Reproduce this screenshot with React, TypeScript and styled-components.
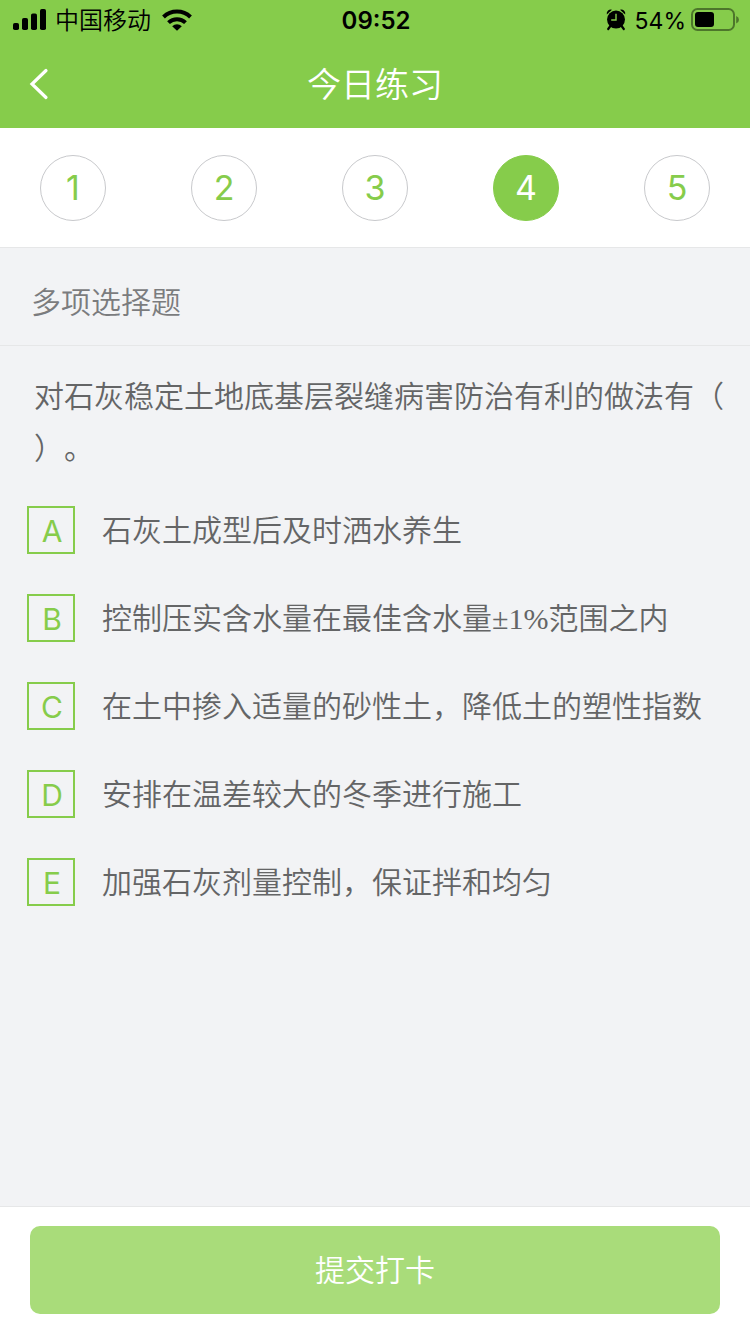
import React, { useState } from "react";
import styled, { createGlobalStyle } from "styled-components";

const GREEN = "#86cc4b";
const CJK = '"Noto Sans CJK SC", sans-serif';

const GlobalStyle = createGlobalStyle`
  * { box-sizing: border-box; }
  body { margin: 0; background: #f2f3f5; }
  button, input { font: inherit; margin: 0; padding: 0; border: 0; }
`;

const Screen = styled.div`
  display: flex;
  flex-direction: column;
  min-height: 100vh;
  font-family: Inter, ${CJK};
  font-size: 30px;
  font-weight: 350;
  color: #646566;
  background: #f2f3f5;
`;

const Header = styled.header`
  background: ${GREEN};
`;

const StatusBar = styled.div`
  display: grid;
  grid-template-columns: 1fr auto 1fr;
  align-items: center;
  height: 40px;
  padding: 0 11px 0 13px;
  font-size: 24px;
  line-height: 32px;
  color: #000;
`;

const StatusGroup = styled.div<{ $end?: boolean }>`
  display: flex;
  align-items: center;
  justify-content: ${(p) => (p.$end ? "flex-end" : "flex-start")};
  gap: ${(p) => (p.$end ? "5px" : "9px")};

  svg { display: block; flex: none; }
`;

const Carrier = styled.span`
  padding: 2px 2px 0 0;
`;

const Charge = styled.span`
  padding: 2px 0 0 4px;
  font-size: 23px;
  font-weight: 400;
`;

const Clock = styled.time`
  padding-top: 2px;
  font-weight: 600;
`;

const TitleBar = styled.div`
  display: grid;
  grid-template-columns: 88px 1fr 88px;
  align-items: center;
  height: 88px;
`;

const BackButton = styled.button`
  display: flex;
  align-items: center;
  height: 88px;
  padding-left: 29px;
  background: none;
  cursor: pointer;
`;

const Title = styled.h1`
  margin: 0;
  padding-top: 2px;
  font-size: 34px;
  font-weight: 350;
  line-height: 86px;
  text-align: center;
  color: #fff;
`;

const Steps = styled.nav`
  display: flex;
  justify-content: space-between;
  padding: 27px 40px 26px;
  background: #fff;
  border-bottom: 1px solid #e6e7e8;
`;

const Step = styled.button<{ $active: boolean }>`
  && {
    width: 66px;
    height: 66px;
    border: 1px solid ${(p) => (p.$active ? GREEN : "#c8c9cc")};
    border-radius: 50%;
    background: ${(p) => (p.$active ? GREEN : "#fff")};
    color: ${(p) => (p.$active ? "#fff" : GREEN)};
    font-size: 34px;
    font-weight: 400;
    line-height: 64px;
    text-align: center;
    cursor: pointer;
  }
`;

const Kind = styled.h2`
  margin: 0;
  padding: 4px 31px 0;
  height: 98px;
  border-bottom: 1px solid #e6e7e8;
  font-size: 30px;
  font-weight: 350;
  line-height: 100px;
  color: #7b7c7e;
`;

const Quiz = styled.fieldset`
  flex: 1;
  margin: 0;
  padding: 0;
  border: 0;
  min-width: 0;
`;

const Question = styled.legend`
  padding: 24px 24px 0 34px;
  line-height: 52px;
  text-spacing-trim: space-all;
`;

const Options = styled.ul`
  display: flex;
  flex-direction: column;
  gap: 40px;
  margin: 0;
  padding: 32px 27px;
  list-style: none;
`;

const Option = styled.label`
  display: flex;
  align-items: center;
  gap: 27px;
  cursor: pointer;
`;

const Mark = styled.span`
  display: grid;
  flex: none;
  width: 48px;
  height: 48px;
  color: ${GREEN};

  > * { grid-area: 1 / 1; }
`;

const Box = styled.input`
  && {
    appearance: none;
    width: 48px;
    height: 48px;
    border: 2px solid ${GREEN};
    cursor: pointer;
  }
  &:checked { background: ${GREEN}; }
  &:checked + span { color: #fff; }
`;

const Letter = styled.span`
  padding-left: 2px;
  font-weight: 400;
  line-height: 50px;
  text-align: center;
  pointer-events: none;
`;

const OptionText = styled.span`
  padding-top: 2px;
  font-family: "Liberation Serif", ${CJK};
  line-height: 46px;
`;

const Footer = styled.footer`
  padding: 19px 30px 20px;
  background: #fff;
  border-top: 1px solid #e6e7e8;
`;

const Submit = styled.button`
  && {
    display: block;
    width: 100%;
    height: 88px;
    border-radius: 10px;
    background: #a9dc7a;
    color: #fff;
    line-height: 88px;
    cursor: pointer;
  }
`;

const SignalIcon = () => (
  <svg width="33" height="22" viewBox="0 0 33 22" aria-hidden="true">
    <rect x="0" y="14" width="6" height="7" rx="1.8" />
    <rect x="9" y="9" width="6" height="12" rx="1.8" />
    <rect x="18" y="4.5" width="6" height="16.5" rx="1.8" />
    <rect x="27" y="0" width="6" height="21" rx="1.8" />
  </svg>
);

const WifiIcon = () => (
  <svg width="30" height="22" viewBox="0 0 30 22" aria-hidden="true">
    <g fill="none" stroke="#000" strokeWidth="4">
      <path d="M1.5 8a19.5 19.5 0 0 1 27 0" />
      <path d="M6.5 13.6a12.4 12.4 0 0 1 17 0" />
    </g>
    <path d="M15 21.8l-4.8-4.6a7.2 7.2 0 0 1 9.6 0z" />
  </svg>
);

const AlarmIcon = () => (
  <svg width="20" height="22" viewBox="0 0 20 22" aria-hidden="true">
    <circle cx="10" cy="10.6" r="9" />
    <path d="M.8 5.4A4 4 0 0 1 6 .8zM19.2 5.4A4 4 0 0 0 14 .8z" />
    <path d="M4.4 17L2.2 20M15.6 17l2.2 3" stroke="#000" strokeWidth="2.2" strokeLinecap="round" />
    <path d="M10 4.8V11H5.2" fill="none" stroke={GREEN} strokeWidth="1.4" />
  </svg>
);

const BatteryIcon = () => (
  <svg width="48" height="24" viewBox="0 0 48 24" aria-hidden="true">
    <rect x="1" y="1" width="42" height="21" rx="5.5" fill="none" stroke="#000" strokeOpacity=".42" strokeWidth="2" />
    <rect x="4" y="4" width="19" height="15" rx="3" />
    <path d="M45.2 8q2.8 1 2.8 3.7t-2.8 3.7z" fillOpacity=".42" />
  </svg>
);

const steps = [1, 2, 3, 4, 5];
const options = [
  ["A", "石灰土成型后及时洒水养生"],
  ["B", "控制压实含水量在最佳含水量±1%范围之内"],
  ["C", "在土中掺入适量的砂性土，降低土的塑性指数"],
  ["D", "安排在温差较大的冬季进行施工"],
  ["E", "加强石灰剂量控制，保证拌和均匀"],
];

export default function App() {
  const [current, setCurrent] = useState(4);

  return (
    <Screen lang="zh-CN">
      <GlobalStyle />
      <Header>
        <StatusBar>
          <StatusGroup>
            <SignalIcon />
            <Carrier>中国移动</Carrier>
            <WifiIcon />
          </StatusGroup>
          <Clock>09:52</Clock>
          <StatusGroup $end>
            <AlarmIcon />
            <Charge>54%</Charge>
            <BatteryIcon />
          </StatusGroup>
        </StatusBar>
        <TitleBar>
          <BackButton type="button" aria-label="返回">
            <svg width="20" height="32" viewBox="0 0 20 32" fill="none" stroke="#fff" strokeWidth="3.2" strokeLinecap="round" strokeLinejoin="miter">
              <path d="M17 2.5L3 16l14 13.5" />
            </svg>
          </BackButton>
          <Title>今日练习</Title>
        </TitleBar>
      </Header>
      <Steps>
        {steps.map((n) => (
          <Step
            key={n}
            type="button"
            $active={n === current}
            aria-current={n === current ? "step" : undefined}
            onClick={() => setCurrent(n)}
          >
            {n}
          </Step>
        ))}
      </Steps>
      <Kind>多项选择题</Kind>
      <Quiz>
        <Question>
          对石灰稳定土地底基层裂缝病害防治有利的做法有（
          <br />
          ）。
        </Question>
        <Options>
          {options.map(([letter, text]) => (
            <li key={letter}>
              <Option>
                <Mark>
                  <Box type="checkbox" name="answer" value={letter} />
                  <Letter>{letter}</Letter>
                </Mark>
                <OptionText>{text}</OptionText>
              </Option>
            </li>
          ))}
        </Options>
      </Quiz>
      <Footer>
        <Submit type="button">提交打卡</Submit>
      </Footer>
    </Screen>
  );
}
